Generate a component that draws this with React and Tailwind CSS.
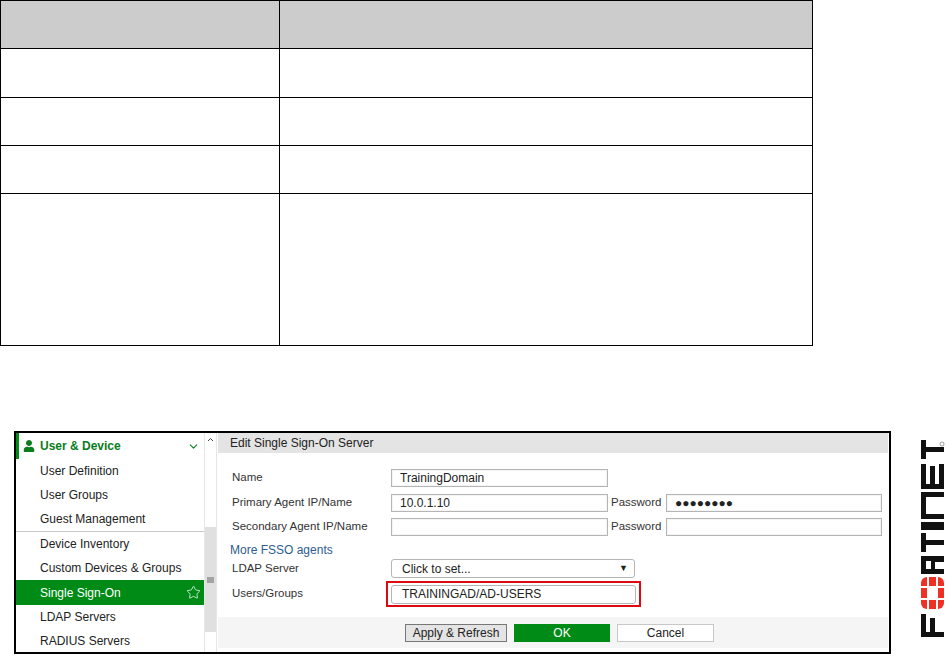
import React from "react";
import { ChevronDown, Star } from "lucide-react";
import { FaUser } from "react-icons/fa";

function TableRow({ h, header }) {
  return (
    <div className={`flex border-b border-black ${h} ${header ? "bg-[#cccccc]" : "bg-white"}`}>
      <div className="w-[279px] border-r border-black" />
      <div className="flex-1" />
    </div>
  );
}

function NavItem({ children, active }) {
  return (
    <div className={`flex h-6 items-center pl-6 text-[12px] ${active ? "h-[25px] bg-[#008a16] text-white" : "text-[#222222]"}`}>
      <span className="flex-1">{children}</span>
      {active && <Star size={15} strokeWidth={1.2} className="mr-[3px] text-white" />}
    </div>
  );
}

function Field({ className, children }) {
  return (
    <div className={`flex h-[18px] items-center border border-[#b5b5b5] bg-white text-[12px] text-[#222222] shadow-[inset_0_0_0_1px_#f4f4f4] ${className}`}>
      {children}
    </div>
  );
}

function FormRow({ label, className, children }) {
  return (
    <div className={`flex items-center ${className}`}>
      <div className="w-[159px] text-[11.5px] text-[#333333]">{label}</div>
      {children}
    </div>
  );
}

function Logo() {
  return (
    <svg width="26" height="202" viewBox="0 0 26 202" className="ml-[29px] mt-[7px] shrink-0" aria-label="Fortinet logo">
      <g transform="translate(1 199) rotate(-90)">
        <g fill="#111111">
          <rect x="0" y="0" width="5" height="23" />
          <rect x="5" y="0" width="18" height="5" />
          <rect x="5" y="9" width="14" height="5" />
          <rect x="63" y="0" width="5" height="23" />
          <rect x="68" y="0" width="13" height="5" />
          <rect x="68" y="10" width="13" height="4" />
          <rect x="76" y="0" width="5" height="14" />
          <rect x="75" y="14" width="6" height="9" />
          <rect x="85" y="0" width="19" height="5" />
          <rect x="92" y="5" width="5" height="18" />
          <rect x="107" y="0" width="8" height="23" />
          <rect x="118" y="0" width="5" height="23" />
          <rect x="123" y="0" width="22" height="5" />
          <rect x="140" y="5" width="5" height="18" />
          <rect x="148" y="0" width="5" height="23" />
          <rect x="153" y="0" width="20" height="5" />
          <rect x="153" y="9" width="18" height="5" />
          <rect x="153" y="18" width="20" height="5" />
          <rect x="178" y="0" width="19" height="5" />
          <rect x="185" y="5" width="5" height="18" />
        </g>
        <g fill="#ee3124">
          <path d="M28 6 a6 6 0 0 1 6 -6 h3 v6 z" />
          <rect x="39" y="0" width="10" height="6" />
          <path d="M51 0 h3 a6 6 0 0 1 6 6 h-9 z" />
          <rect x="28" y="8" width="9" height="7" />
          <rect x="51" y="8" width="9" height="7" />
          <path d="M28 17 h9 v6 h-3 a6 6 0 0 1 -6 -6 z" />
          <rect x="39" y="17" width="10" height="6" />
          <path d="M51 17 h9 a6 6 0 0 1 -6 6 h-3 z" />
        </g>
      </g>
      <circle cx="22" cy="6" r="2" fill="none" stroke="#777777" strokeWidth="0.7" />
    </svg>
  );
}

export default function App() {
  return (
    <div className="h-[658px] w-[947px] overflow-hidden bg-white font-['Liberation_Sans',Arial,sans-serif]">
      <div className="w-[813px] border-x border-t border-black">
        <TableRow h="h-[48px]" header />
        <TableRow h="h-[49px]" />
        <TableRow h="h-[48px]" />
        <TableRow h="h-[48px]" />
        <TableRow h="h-[152px]" />
      </div>

      <div className="mt-[85px] flex">
        <div className="ml-[14px] flex h-[223px] w-[877px] shrink-0 border-[2px] border-black bg-white">
          <div className="w-[188px] shrink-0 bg-white">
            <div className="flex h-[26px] items-center border-l-[3px] border-[#008a16] pl-[4px] text-[12px] font-bold text-[#0a7d1e]">
              <FaUser size={12} className="text-[#0a7d1e]" />
              <span className="ml-[5px] flex-1">User &amp; Device</span>
              <ChevronDown size={13} strokeWidth={2} className="mr-[4px]" />
            </div>
            <NavItem>User Definition</NavItem>
            <NavItem>User Groups</NavItem>
            <div className="border-b border-[#c8c8c8] pb-0">
              <NavItem>Guest Management</NavItem>
            </div>
            <NavItem>Device Inventory</NavItem>
            <NavItem>Custom Devices &amp; Groups</NavItem>
            <NavItem active>Single Sign-On</NavItem>
            <NavItem>LDAP Servers</NavItem>
            <NavItem>RADIUS Servers</NavItem>
          </div>

          <div className="flex w-[13px] shrink-0 flex-col border-x border-[#e6e6e6] bg-white">
            <div className="flex h-[13px] items-center justify-center">
              <svg width="7" height="5" viewBox="0 0 7 5"><path d="M1 4 L3.5 1.5 L6 4" fill="none" stroke="#444444" strokeWidth="1" /></svg>
            </div>
            <div className="mt-[81px] flex h-[105px] items-center justify-center bg-[#e0e0e0]">
              <svg width="7" height="6" viewBox="0 0 7 6"><path d="M0 1 H7 M0 3 H7 M0 5 H7" stroke="#666666" strokeWidth="1" /></svg>
            </div>
          </div>

          <div className="ml-[1px] flex min-w-0 flex-1 flex-col pr-[1px]">
            <div className="flex h-[20px] items-center bg-[#e4e4e4] pl-3 text-[12px] text-[#222222]">Edit Single Sign-On Server</div>

            <div className="flex-1 pl-[14px] pt-4">
              <FormRow label="Name">
                <Field className="w-[217px] pl-2">TrainingDomain</Field>
              </FormRow>
              <FormRow label="Primary Agent IP/Name" className="mt-[7px]">
                <Field className="w-[217px] pl-2">10.0.1.10</Field>
                <span className="ml-[3px] w-[55px] text-[11.5px] text-[#333333]">Password</span>
                <Field className="w-[216px] pl-2 text-[11px] tracking-[0px]">●●●●●●●●</Field>
              </FormRow>
              <FormRow label="Secondary Agent IP/Name" className="mt-[6px]">
                <Field className="w-[217px]" />
                <span className="ml-[3px] w-[55px] text-[11.5px] text-[#333333]">Password</span>
                <Field className="w-[216px]" />
              </FormRow>
              <div className="-ml-[2px] mt-[7px] text-[12px] leading-[14px] text-[#2d5d8f]">More FSSO agents</div>
              <FormRow label="LDAP Server" className="mt-[2px]">
                <div className="flex h-[19px] w-[244px] items-center justify-between rounded-[3px] border border-[#b5b5b5] pl-[10px] pr-[6px] text-[12px] text-[#222222]">
                  <span>Click to set...</span>
                  <span className="text-[9px] leading-none">▼</span>
                </div>
              </FormRow>
              <FormRow label="Users/Groups" className="mt-[3px]">
                <div className="-ml-[5px] flex h-[26px] w-[255px] items-center border-[2px] border-[#dd0a0f] px-[3px]">
                  <div className="flex h-[19px] w-full items-center rounded-[3px] border border-[#b5b5b5] pl-[10px] text-[12px] text-[#222222]">TRAININGAD/AD-USERS</div>
                </div>
              </FormRow>
            </div>

            <div className="mb-[4px] flex h-[31px] items-center bg-[#f5f5f5] pl-[187px]">
              <button className="flex h-[18px] w-[102px] items-center justify-center border border-[#777777] bg-[#e4e4e4] text-[12px] text-[#222222]">Apply &amp; Refresh</button>
              <button className="ml-[7px] flex h-[18px] w-[96px] items-center justify-center bg-[#008a16] text-[12px] text-white">OK</button>
              <button className="ml-[7px] flex h-[18px] w-[97px] items-center justify-center border border-[#c8c8c8] bg-white text-[12px] text-[#222222]">Cancel</button>
            </div>
          </div>
        </div>
        <Logo />
      </div>
    </div>
  );
}
